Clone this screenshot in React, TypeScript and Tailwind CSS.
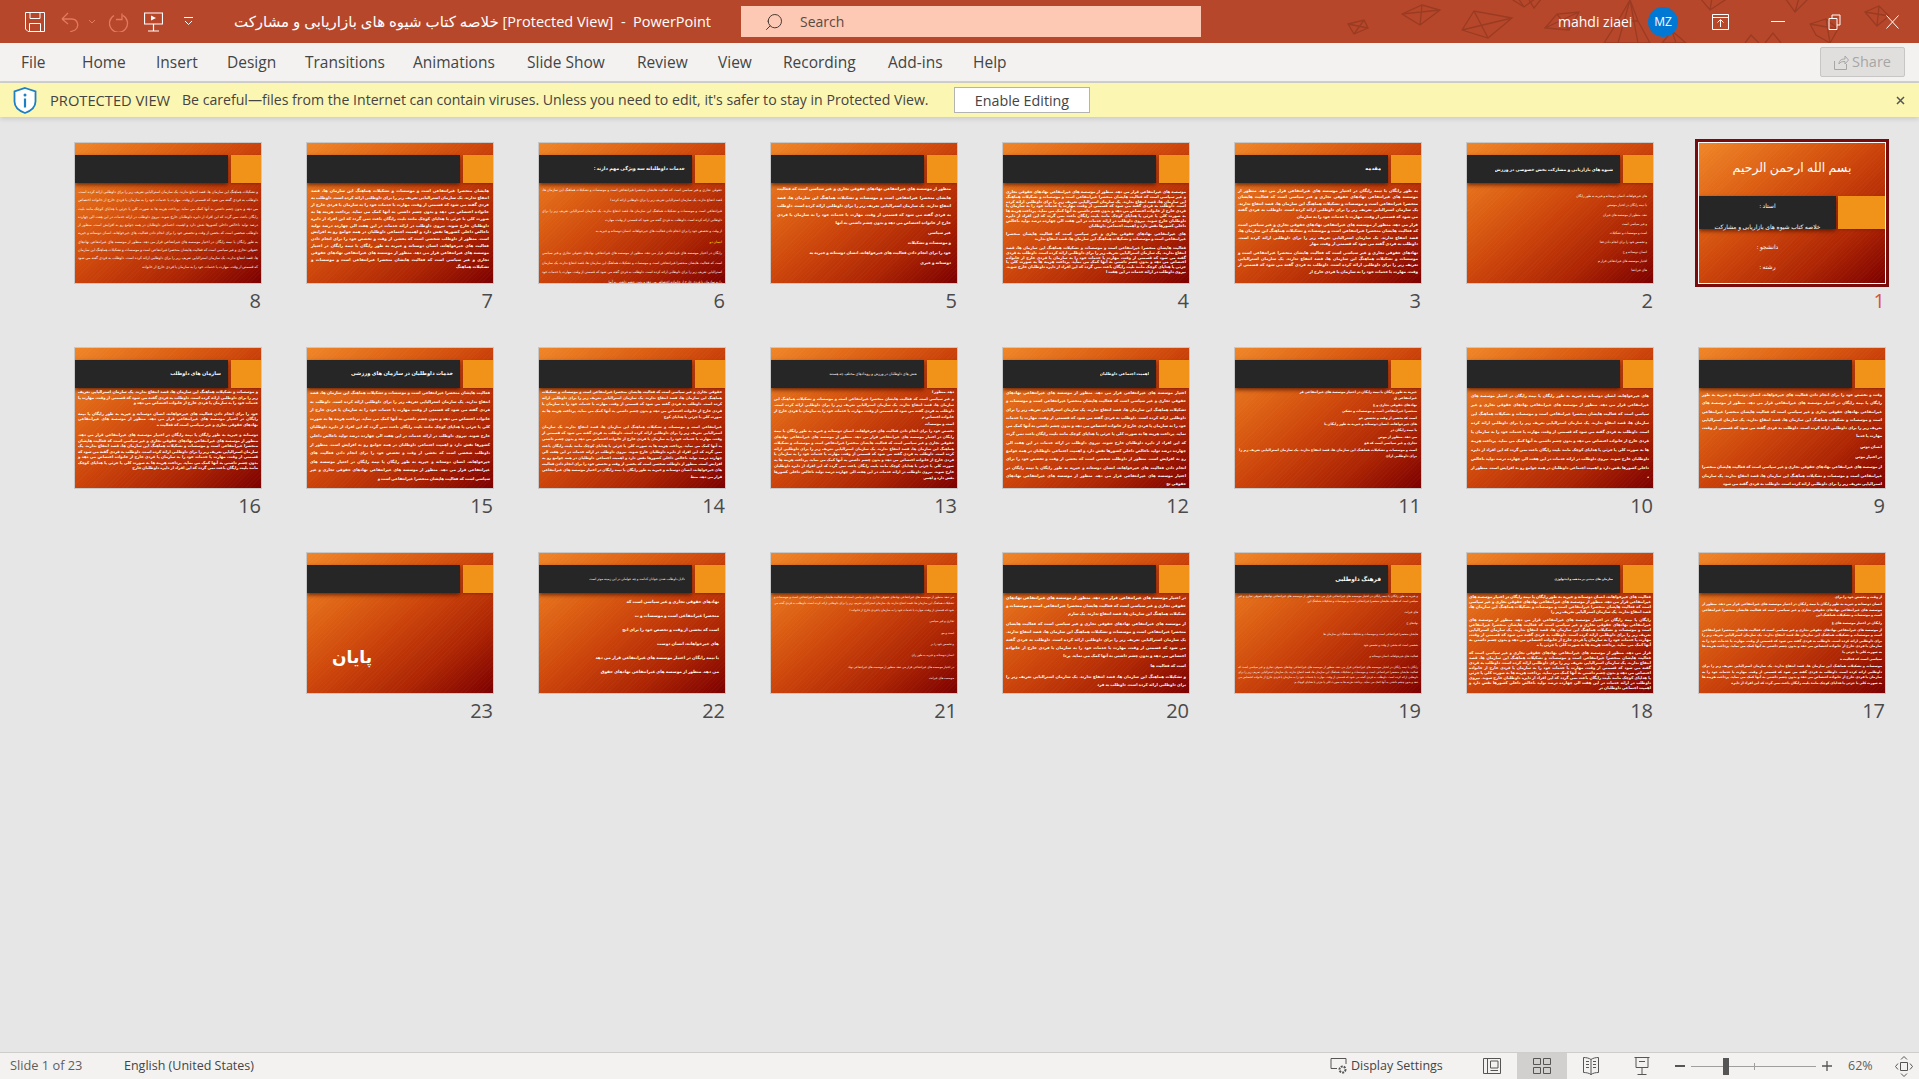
import { Search } from "lucide-react";

const TEXT =
  "منظور از داوطلب شخصی است که بخشی از وقت و تخصص خود را برای انجام دادن فعالیت های خیرخواهانه، انسان دوستانه و خیریه به طور رایگان یا نیمه رایگان در اختیار موسسه های غیرانتفاعی قرار می دهد. منظور از موسسه های غیرانتفاعی نهادهای حقوقی تجاری و غیر سیاسی است که فعالیت هایشان منحصرا غیرانتفاعی است و موسسات و تشکیلات هماهنگ این سازمان ها، قصد انتفاع ندارند. یک سازمان استرالیایی تعریف زیر را برای داوطلبی ارائه کرده است. داوطلب به فردی گفته می شود که قسمتی از وقت، مهارت یا خدمات خود را به سازمان یا فردی خارج از خانواده اختصاص می دهد و بدون چشم داشتی به آنها کمک می نماید. پرداخت هزینه ها به صورت کلی یا جزئی یا هدایای کوچک مانند بلیت رایگان باعث نمی گردد که این افراد از دایره داوطلبان خارج شوند. نیروی داوطلب در ارائه خدمات در این هفت الی چهارده درصد تولید ناخالص داخلی کشورها نقش دارد و اهمیت اجتماعی داوطلبان در همه جوامع رو به افزایش است. ";

const words = (n: number, start = 0) => {
  const from = start % 300;
  const slice = (TEXT + TEXT).slice(from, from + n);
  return slice.slice(slice.indexOf(" ") + 1);
};

type Slide = {
  n: number;
  title?: string;
  titleCls?: string;
  body: number[];
  cls: string;
  gap: string;
  hl?: number;
};

const slideBg =
  "bg-[repeating-linear-gradient(135deg,rgba(255,255,255,0.025)_0px,rgba(255,255,255,0.025)_1px,transparent_1px,transparent_3px),linear-gradient(to_bottom_right,#f08628_0%,#dd6114_28%,#cb430a_50%,#ad2503_75%,#7d0000_100%)]";

const slides: Slide[] = [
  { n: 2, title: "شیوه های بازاریابی و مشارکت بخش خصوصی در ورزش", titleCls: "text-[4.4px]", body: [54, 31, 32, 21, 25, 34, 18, 36, 17], cls: "pt-[11px] px-[6px] text-[3.2px] leading-[4px] font-normal", gap: "gap-[5.3px]" },
  { n: 3, title: "مقدمه", titleCls: "text-[5px]", body: [380, 300, 290], cls: "pt-[5px] px-[3px] text-[4px] leading-[6.400px]", gap: "gap-[2px]" },
  { n: 4, body: [660, 150, 480], cls: "pt-[7px] px-[3px] text-[3.800px] leading-[4.800px]", gap: "gap-[4px]" },
  { n: 5, body: [370, 12, 20, 74, 16], cls: "pt-[2px] px-[6px] text-[4px] leading-[8.500px]", gap: "gap-[1.500px]" },
  { n: 6, title: "خدمات داوطلبانه سه ویژگی مهم دارند :", titleCls: "text-[4.800px]", body: [190, 190, 90, 20, 420], cls: "pt-[2px] px-[3px] text-[3.400px] leading-[9.500px] font-normal", gap: "gap-[1.500px]", hl: 3 },
  { n: 7, body: [900], cls: "pt-[5px] px-[4px] text-[4px] leading-[6.900px]", gap: "gap-0" },
  { n: 8, body: [1060], cls: "pt-[5px] px-[3px] text-[3.600px] leading-[8.300px] font-normal", gap: "gap-0" },
  { n: 9, body: [440, 16, 18, 250], cls: "pt-[3px] px-[3px] text-[3.800px] leading-[8.300px]", gap: "gap-[2px]" },
  { n: 10, body: [780], cls: "pt-[3px] px-[4px] text-[3.800px] leading-[9px]", gap: "gap-0" },
  { n: 11, body: [70, 16, 28, 42, 30, 60, 22, 22, 28, 120], cls: "pt-[1px] px-[4px] text-[3.400px] leading-[6.400px]", gap: "gap-0" },
  { n: 12, title: "اهمیت اجتماعی داوطلبان", titleCls: "text-[4px]", body: [930], cls: "pt-[1px] px-[3px] text-[3.900px] leading-[8.300px]", gap: "gap-0" },
  { n: 13, title: "نقش های داوطلبان در ورزش و رویدادهای مختلف چه هستند", titleCls: "text-[3.600px] font-normal", body: [14, 290, 14, 750], cls: "pt-[1px] px-[3px] text-[3.600px] leading-[5.800px]", gap: "gap-[1.500px]" },
  { n: 14, body: [400, 760], cls: "pt-[1px] px-[3px] text-[3.600px] leading-[6.200px]", gap: "gap-[4px]" },
  { n: 15, title: "خدمات داوطلبان در سازمان های ورزشی", titleCls: "text-[5.200px]", body: [880], cls: "pt-[1px] px-[3px] text-[3.900px] leading-[8.600px]", gap: "gap-0" },
  { n: 16, title: "سازمان های داوطلب", titleCls: "text-[5px]", body: [240, 220, 590], cls: "pt-[1px] px-[3px] text-[3.800px] leading-[5.500px]", gap: "gap-[5px]" },
  { n: 17, body: [30, 240, 30, 420, 24, 380], cls: "pt-[1px] px-[3px] text-[3.400px] leading-[5.400px]", gap: "gap-[2px]" },
  { n: 18, title: "سازمان های مبتنی بر مذهب و ایدئولوژی", titleCls: "text-[3px]", body: [320, 490, 640], cls: "pt-[1px] px-[2px] text-[3.800px] leading-[5px]", gap: "gap-[3px]" },
  { n: 19, title: "فرهنگ داوطلبی", titleCls: "text-[5.800px]", body: [220, 14, 18, 70, 36, 40, 500], cls: "pt-[1px] px-[3px] text-[2.900px] leading-[5px] font-normal", gap: "gap-[6px]" },
  { n: 20, body: [220, 380, 20, 130], cls: "pt-[1px] px-[3px] text-[4px] leading-[7.800px]", gap: "gap-[3px]" },
  { n: 21, body: [340, 20, 14, 20, 36, 80, 18], cls: "pt-[1px] px-[3px] text-[3px] leading-[6.400px] font-normal", gap: "gap-[5px]" },
  { n: 22, title: "دلایل داوطلب شدن جوانان کدامند و چه عواملی در این زمینه موثر است", titleCls: "text-[3.300px] font-normal", body: [43, 38, 42, 30, 60, 51], cls: "pt-[7px] px-[6px] text-[4.200px] leading-[4px]", gap: "gap-[10px]" },
];

const Bars = ({ title, titleCls }: { title?: string; titleCls?: string }) => (
  <div className="mt-[12px] flex gap-[3px] h-[28px]" dir="ltr">
    <div className="flex-1 bg-[#262626] shadow-[0_2px_4px_rgba(60,10,0,0.7)] flex items-center px-[7px]" dir="rtl">
      {title && <span className={`font-bold text-white truncate ${titleCls}`}>{title}</span>}
    </div>
    <div className="w-[30px] bg-[#f09318] shadow-[0_1px_2px_rgba(90,20,0,0.5)]" />
  </div>
);

const PageNo = ({ n, active }: { n: number; active?: boolean }) => (
  <div className={`mt-[3px] pr-[1px] text-right text-[20px] leading-[27px] font-normal ${active ? "text-[#d9523b]" : "text-[#4a4a4a]"}`} dir="ltr">
    {n}
  </div>
);

const Thumb = ({ s }: { s: Slide }) => (
  <div>
    <div className={`h-[142px] border border-[#c8c8c8] overflow-hidden ${slideBg}`}>
      <Bars title={s.title} titleCls={s.titleCls} />
      <div className={`flex flex-col text-white font-bold text-justify ${s.gap} ${s.cls}`}>
        {s.body.map((len, i) => (
          <p key={i} className={s.hl === i ? "text-[#ffea00]" : ""}>
            {words(len, s.n * 37 + i * 53)}
          </p>
        ))}
      </div>
    </div>
    <PageNo n={s.n} />
  </div>
);

const FirstThumb = () => (
  <div>
    <div className="-m-[3px] border-[3px] border-[#780b0b]">
      <div className={`h-[142px] border border-white overflow-hidden text-white text-center ${slideBg}`}>
        <div className="h-[53px] pt-[13px] text-[12.500px] leading-[24px] font-normal">بسم الله ارحمن الرحیم</div>
        <div className="flex h-[33px]" dir="ltr">
          <div className="w-[137px] bg-[#262626] shadow-[0_2px_4px_rgba(60,10,0,0.7)] text-[6px]" dir="rtl">
            <div className="pt-[6.500px] leading-[7px]">استاد :</div>
            <div className="pt-[14px] whitespace-nowrap leading-[7px]">خلاصه کتاب شیوه های بازاریابی و مشارکت</div>
          </div>
          <div className="ml-[2px] flex-1 bg-[#f09318] shadow-[0_1px_2px_rgba(90,20,0,0.5)]" />
        </div>
        <div className="mt-[14.500px] mr-[49px] w-[137px] text-[6px] leading-[7px]">دانشجو :</div>
        <div className="mt-[13px] mr-[49px] w-[137px] text-[6px] leading-[7px]">رشته :</div>
      </div>
    </div>
    <PageNo n={1} active />
  </div>
);

const LastThumb = () => (
  <div>
    <div className={`h-[142px] border border-[#c8c8c8] overflow-hidden ${slideBg}`}>
      <Bars />
      <div className="mt-[50px] pl-[25px] text-left text-[17px] leading-[28px] font-bold text-white" dir="ltr">پایان</div>
    </div>
    <PageNo n={23} />
  </div>
);

const tabs = [
  { label: "File", cls: "w-[82px] pl-[21px]" },
  { label: "Home", cls: "w-[74px]" },
  { label: "Insert", cls: "w-[71px]" },
  { label: "Design", cls: "w-[78px]" },
  { label: "Transitions", cls: "w-[108px]" },
  { label: "Animations", cls: "w-[114px]" },
  { label: "Slide Show", cls: "w-[110px]" },
  { label: "Review", cls: "w-[81px]" },
  { label: "View", cls: "w-[65px]" },
  { label: "Recording", cls: "w-[105px]" },
  { label: "Add-ins", cls: "w-[85px]" },
  { label: "Help", cls: "w-[50px]" },
];

// kites scattered behind the right part of the title bar
const Kites = () => (
  <svg className="absolute left-[1340px] top-0" width="560" height="43" viewBox="0 0 560 43" fill="none" stroke="#9a3b23" strokeWidth="1.300">
    <path d="M8 24l16-4 4 8-14 6zM24 20l-10 14M8 24l20 4" />
    <path d="M62 14l20-9 18 5-20 15zM82 5l-2 20M62 14l38-4" />
    <path d="M122 30l12-19 38 7-24 20zM134 11l14 27M122 30l50-12" />
    <path d="M205 28l12-14 22-2-10 18zM217 14l12 16M205 28l34-16" />
    <path d="M264 43l14-22 12-21 8 21 12 22zM278 21l20 0M290 0l-12 43M290 0l8 43" />
    <path d="M170 -2l14 9 12-9zM184 7l-6-9" />
    <path d="M188 -2l6 10 8-10z" />
    <path d="M322 43l10-12 14 12zM332 31l4 12" />
    <path d="M360 -2l10 12 18-12zM370 10l2-12" />
    <path d="M445 -2l10 14 14-14zM455 12l4-14" />
    <path d="M470 24l16-5 12 10-8 14-14-8zM486 19l4 24M470 24l28 5" />
    <path d="M525 12l14-6 10 10-12 10zM539 6l-2 20M525 12l24 4" />
    <path d="M425 43l8-10 8 10M405 43l6-8 8 8" />
  </svg>
);

const App = () => {
  return (
    <div className="h-[1079px] w-[1919px] flex flex-col overflow-hidden bg-[#e6e6e6] font-['Open_Sans','DejaVu_Sans',sans-serif]">
      {/* Title bar */}
      <header className="relative h-[43px] shrink-0 bg-[#b7472a] flex items-center text-white">
        <Kites />
        <div className="relative flex items-center pl-[25px]">
          <svg width="20" height="20" viewBox="0 0 20 20" fill="none" stroke="#fff" strokeWidth="1">
            <path d="M.5.5h19v19H3L.5 17z" />
            <path d="M5 .5v6h10v-6M4.500 19.500v-8h11v8" />
          </svg>
          <svg className="ml-[16px]" width="19" height="20" viewBox="0 0 19 20" fill="none" stroke="#e27a60" strokeWidth="1.300">
            <path d="M1 7l6-6M1 7l6 5M1 7h10a6 6 0 0 1 3 11l-5 2" />
          </svg>
          <svg className="ml-[8px]" width="8" height="5" viewBox="0 0 8 5" fill="none" stroke="#e27a60"><path d="M1 1l3 3 3-3" /></svg>
          <svg className="ml-[13px]" width="20" height="20" viewBox="0 0 20 20" fill="none" stroke="#e27a60" strokeWidth="1.300">
            <path d="M13 1v6h-6M14 3a9 9 0 1 1-9 0" transform="translate(0 .5)" />
          </svg>
          <svg className="ml-[15px]" width="19" height="20" viewBox="0 0 19 20" fill="none" stroke="#fff" strokeWidth="1.200">
            <path d="M.5 1h18v11H.5zM9.500 12v7M4 19h11" />
            <path d="M7 3.500l5 2.500-5 2.500z" fill="#fff" stroke="none" />
          </svg>
          <svg className="ml-[21px]" width="9" height="9" viewBox="0 0 9 9" fill="none" stroke="#fff"><path d="M0 .5h9M1 4l3.500 3.500L8 4" /></svg>
        </div>
        <div className="relative ml-[41px] w-[507px] text-[14.500px] whitespace-pre" dir="ltr">
          <span className="text-[15px]">خلاصه کتاب شیوه های بازاریابی و مشارکت</span>
          {" [Protected View]  -  PowerPoint"}
        </div>
        <div className="relative h-[31px] w-[460px] bg-[#fdc9b4] flex items-center pl-[23px] text-[14px] text-[#5a4a42]">
          <Search className="w-[20px] h-[20px] -scale-x-100 text-[#4a3a32]" strokeWidth={1.2} />
          <span className="ml-[16px]">Search</span>
        </div>
        <span className="relative ml-[357px] text-[14px] w-[90px]">mahdi ziaei</span>
        <div className="relative w-[30px] h-[30px] rounded-full bg-[#0078d4] flex items-center justify-center text-[12px]">MZ</div>
        <svg className="relative ml-[34px]" width="17" height="16" viewBox="0 0 17 16" fill="none" stroke="#fff">
          <path d="M.5.500h16v15H.5zM.5 3.500h16M8.500 13V6M5.500 8.500l3-3 3 3" />
        </svg>
        <div className="relative ml-[42px] w-[14px] h-[1.500px] bg-white" />
        <svg className="relative ml-[43px]" width="13" height="16" viewBox="0 0 13 16" fill="none" stroke="#fff">
          <path d="M1 4.500h8v11H1zM4 4.500V1h8v10H9" />
        </svg>
        <svg className="relative ml-[45px]" width="13" height="14" viewBox="0 0 13 14" fill="none" stroke="#fff"><path d="M.5.500l12 13M12.500.500l-12 13" /></svg>
      </header>

      {/* Ribbon tabs */}
      <nav className="h-[38px] shrink-0 bg-[#f3f2f1] flex items-center text-[15.500px] text-[#444444]">
        {tabs.map((t) => (
          <span key={t.label} className={`pt-[1px] ${t.cls}`}>{t.label}</span>
        ))}
        <button className="ml-auto mr-[14px] w-[85px] h-[30px] rounded-[2px] border border-[#c8c6c4] bg-[#e1dfdd] flex items-center justify-center gap-[3px] text-[14.500px] text-[#a6a6a6]">
          <svg width="15" height="16" viewBox="0 0 15 16" fill="none" stroke="#a6a6a6"><path d="M.5 7v8.500h12V10M5 10c0-4 3-5 6-5V2l3.500 4L11 10V7.500C8 7.500 6 8 5 10z" /></svg>
          Share
        </button>
      </nav>
      <div className="h-[2px] shrink-0 bg-[#d2d0ce]" />

      {/* Protected view bar */}
      <div className="h-[34px] shrink-0 bg-[#fcf6b3] flex items-center text-[14.100px] text-[#444444] shadow-[0_2px_5px_rgba(0,0,0,0.12)] relative">
        <svg className="ml-[13px]" width="24" height="27" viewBox="0 0 24 27" fill="none">
          <path d="M12 1l10.500 3.500v10c0 5.500-5 9.500-10.500 11.500C6.500 24 1.500 20 1.500 14.500v-10z" stroke="#1e7fc4" strokeWidth="1.800" fill="#ffffff" />
          <circle cx="12" cy="8" r="1.500" fill="#1e7fc4" />
          <path d="M12 11.500v9" stroke="#1e7fc4" strokeWidth="2.200" />
        </svg>
        <span className="ml-[13px] w-[132px] text-[14.700px]">PROTECTED VIEW</span>
        <span className="w-[772px]">Be careful—files from the Internet can contain viruses. Unless you need to edit, it's safer to stay in Protected View.</span>
        <button className="w-[136px] h-[26px] pt-[1px] bg-white border border-[#b3b3b3] text-[14.300px]">Enable Editing</button>
        <svg className="ml-auto mr-[14px]" width="9" height="9" viewBox="0 0 9 9" fill="none" stroke="#555" strokeWidth="1.500"><path d="M1 1l7 7M8 1l-7 7" /></svg>
      </div>

      {/* Slide sorter */}
      <main className="flex-1 pt-[25px] pr-[33px]" dir="rtl">
        <div className="grid grid-cols-[repeat(8,188px)] gap-x-[44px] gap-y-[33px]">
          <FirstThumb />
          {slides.map((s) => <Thumb key={s.n} s={s} />)}
          <LastThumb />
        </div>
      </main>

      {/* Status bar */}
      <footer className="h-[27px] shrink-0 border-t border-[#cfcdcb] bg-[#f3f2f1] flex items-center text-[12.500px] text-[#605e5c]">
        <span className="ml-[10px] w-[114px] text-[12.800px]">Slide 1 of 23</span>
        <span className="text-[#444444]">English (United States)</span>
        <svg className="ml-auto" width="18" height="18" viewBox="0 0 18 18" fill="none" stroke="#555">
          <path d="M7 11.500H1V1.500h15V7" />
          <circle cx="12.500" cy="12.500" r="3" strokeWidth="2" strokeDasharray="2 1" />
        </svg>
        <span className="ml-[3px] w-[92px] text-[#444444]">Display Settings</span>
        <svg className="ml-[40px]" width="18" height="16" viewBox="0 0 18 16" fill="none" stroke="#555"><path d="M.5.500h17v15H.5zM4.500.500v15M7.500 3h7.500v7H7.500zM7.500 12.500H15" /></svg>
        <div className="ml-[16px] w-[50px] h-[26px] bg-[#d2d0ce] flex items-center justify-center">
          <svg width="18" height="16" viewBox="0 0 18 16" fill="none" stroke="#555"><path d="M.5.500h7v6h-7zM10.500.500h7v6h-7zM.5 9.500h7v6h-7zM10.500 9.500h7v6h-7z" /></svg>
        </div>
        <svg className="ml-[16px]" width="16" height="18" viewBox="0 0 16 18" fill="none" stroke="#555"><path d="M8 2.500C6 1 3 .5.500.5v15c2.500 0 5.500.5 7.500 2 2-1.500 5-2 7.500-2V.5C13 .5 10 1 8 2.500zM8 2.500V18M3 4.500h3M3 7.500h3M3 10.500h3M10 4.500h3M10 7.500h3M10 10.500h3" /></svg>
        <svg className="ml-[35px]" width="16" height="18" viewBox="0 0 16 18" fill="none" stroke="#555"><path d="M.5.500h15M2 .5v10h12V.5M8 10.500v6.500M3.500 17.500h9M5 4.500h6" /></svg>
        <div className="ml-[25px] w-[10px] h-[1.500px] bg-[#555555]" />
        <div className="relative ml-[6px] w-[125px] h-[1px] bg-[#a19f9d]">
          <div className="absolute left-[32px] -top-[8px] w-[6px] h-[17px] bg-[#555555]" />
          <div className="absolute left-[63px] -top-[3px] w-[1px] h-[7px] bg-[#a19f9d]" />
        </div>
        <svg className="ml-[6px]" width="10" height="10" viewBox="0 0 10 10" stroke="#555" strokeWidth="1.300"><path d="M0 5h10M5 0v10" /></svg>
        <span className="ml-[16px] w-[47px] text-[#605e5c]">62%</span>
        <svg className="mr-[6px]" width="18" height="21" viewBox="0 0 18 21" fill="none" stroke="#555"><path d="M5.500 6.500h7v8h-7zM6 3.500l3-3 3 3M6 17.500l3 3 3-3M3 7.500l-2.500 3 2.500 3M15 7.500l2.500 3-2.500 3" /></svg>
      </footer>
    </div>
  );
};

export default App;
